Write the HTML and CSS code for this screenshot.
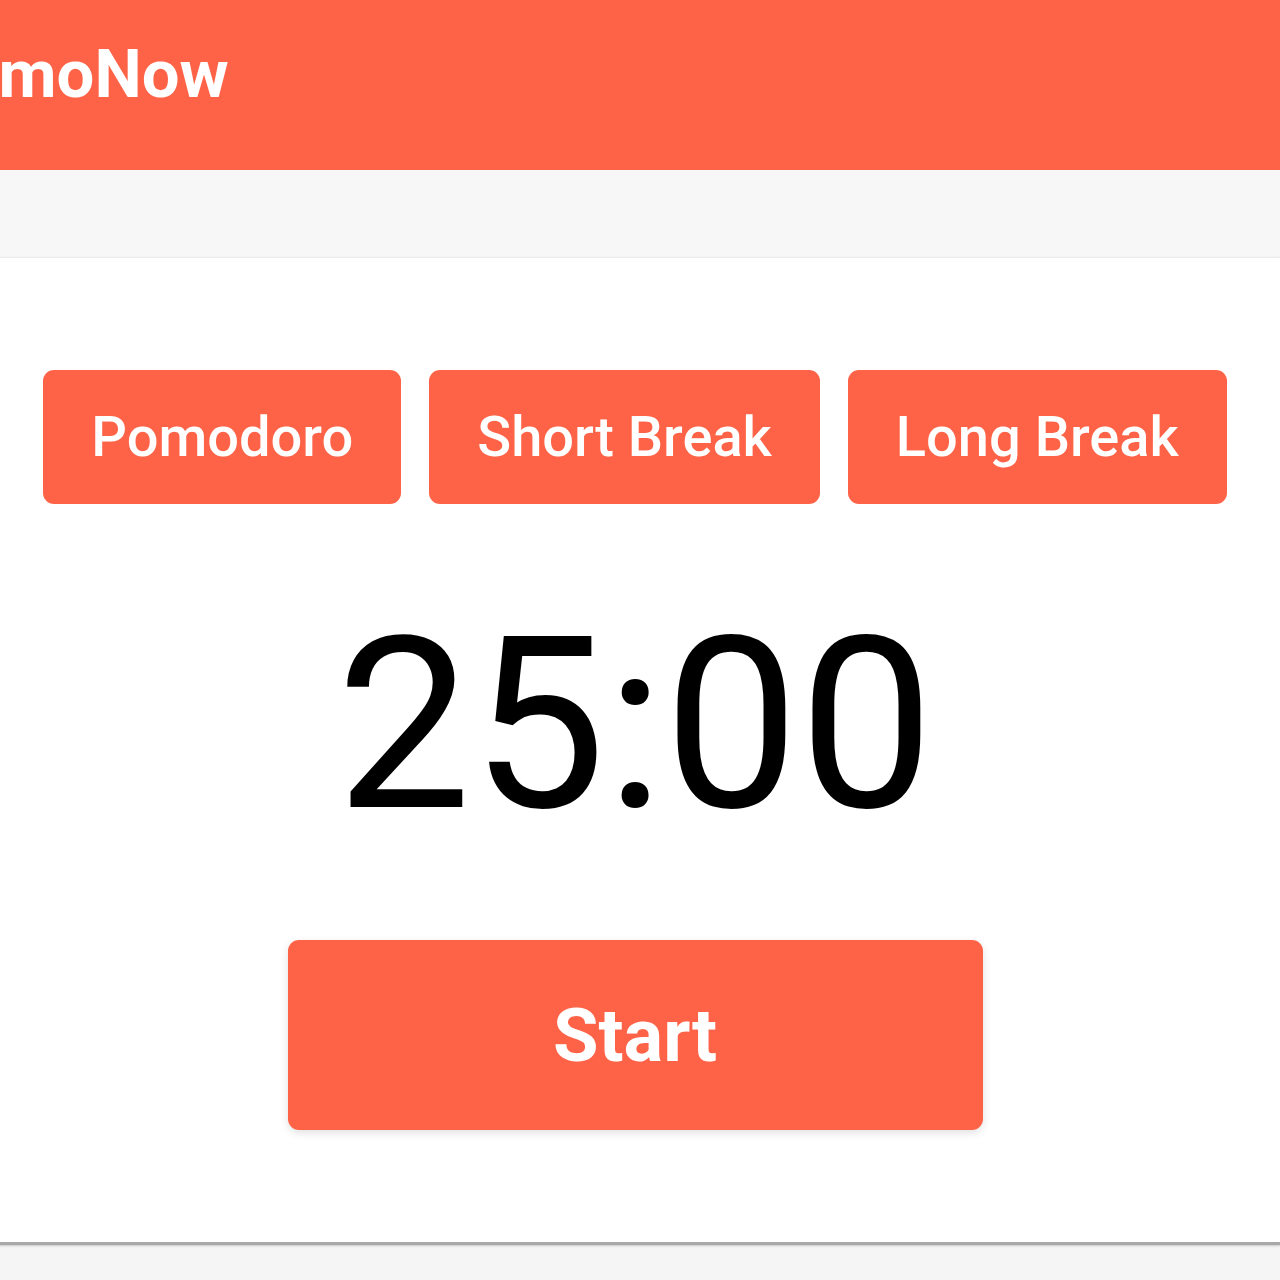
FILE: index.html
```html
<!DOCTYPE html>
<html lang="en">
<head>
    <meta charset="UTF-8">
    <meta name="viewport" content="width=device-width, initial-scale=1.0">
    <title>PomoNow</title>
<link rel="stylesheet" href="styles.css">
</head>
<body>
<header class="header">
    <h1 class="logo">PomoNow</h1>
</header>
<div class="band"></div>
<main class="card">
    <div class="modes">
        <button class="mode">Pomodoro</button>
        <button class="mode">Short Break</button>
        <button class="mode">Long Break</button>
    </div>
    <div class="timer">25:00</div>
    <button class="start">Start</button>
</main>
<div class="footer"></div>
</body>
</html>
```

FILE: styles.css
```css
body {margin: 0;background: #f5f5f5;font-family: Roboto, "Liberation Sans", sans-serif;overflow: hidden;}
.header {height: 170px;background: #ff6347;box-sizing: border-box;padding-top: 41px;overflow: hidden;}
.logo {margin: 0 0 0 -82px;font-size: 67px;line-height: 1;font-weight: 700;color: #fff;}
.band {height: 88px;background: #f7f7f7;}
.card {background: #fff;padding: 112px 0;display: flex;flex-direction: column;align-items: center;border-bottom: 3px solid #a9a9a9;box-shadow: 0 -1px 2px rgba(0,0,0,0.06), 0 1px 2px rgba(0,0,0,0.18);margin-left: -10px;}
.modes {display: flex;gap: 28px;}
.mode {height: 134px;padding: 0 48px;border: none;border-radius: 11px;background: #ff6347;color: #fff;font-family: inherit;font-size: 56px;font-weight: 500;}
.timer {margin: 101px 0 95px;font-size: 240px;line-height: 240px;color: #000;}
.start {width: 695px;height: 190px;border: none;border-radius: 11px;background: #ff6347;color: #fff;font-family: inherit;font-size: 74px;font-weight: 700;box-shadow: 0 3px 8px rgba(0,0,0,0.12);}
.footer {height: 40px;}
```
